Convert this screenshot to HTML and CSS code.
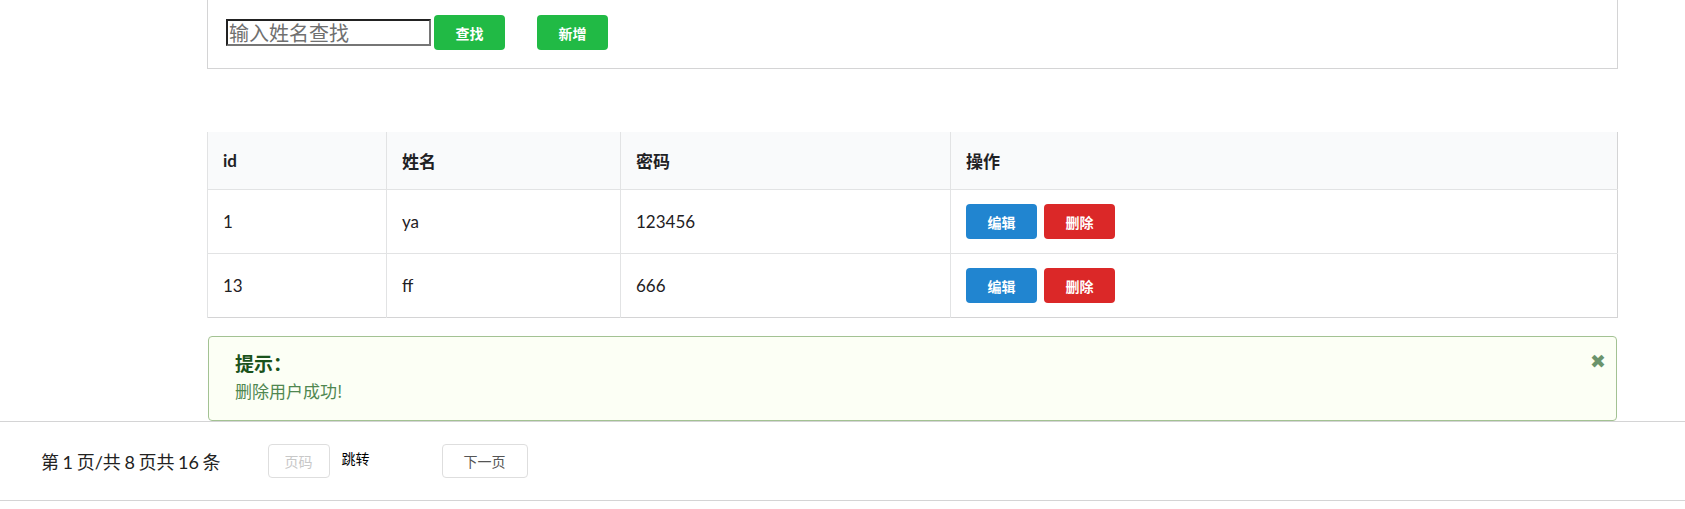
FILE: index.html
```html
<!DOCTYPE html>
<html lang="zh-CN">
<head>
<meta charset="utf-8">
<title>用户管理</title>
<link rel="stylesheet" href="styles.css">
</head>
<body>
<div class="page">
  <div class="search-box">
    <input class="search-input" type="text" placeholder="输入姓名查找">
    <button class="btn btn-green">查找</button>
    <button class="btn btn-green btn-add">新增</button>
  </div>

  <table class="user-table">
    <thead>
      <tr>
        <th class="c-id">id</th>
        <th class="c-name">姓名</th>
        <th class="c-pwd">密码</th>
        <th>操作</th>
      </tr>
    </thead>
    <tbody>
      <tr>
        <td>1</td>
        <td>ya</td>
        <td>123456</td>
        <td><div class="ops"><button class="btn btn-blue">编辑</button><button class="btn btn-red">删除</button></div></td>
      </tr>
      <tr>
        <td>13</td>
        <td>ff</td>
        <td>666</td>
        <td><div class="ops"><button class="btn btn-blue">编辑</button><button class="btn btn-red">删除</button></div></td>
      </tr>
    </tbody>
  </table>

  <div class="message">
    <span class="close">✖</span>
    <div class="msg-header">提示：</div>
    <p class="msg-text">删除用户成功!</p>
  </div>
</div>

<div class="pager">
  <span class="pager-info">第 1 页/共 8 页共 16 条</span>
  <input class="page-input" type="text" placeholder="页码">
  <span class="jump">跳转</span>
  <button class="next-btn">下一页</button>
</div>
</body>
</html>
```
FILE: styles.css
```css
html, body {
  margin: 0;
  padding: 0;
  background: #ffffff;
}

body {
  font-family: Lato, "Noto Sans CJK SC", sans-serif;
  color: rgba(0, 0, 0, 0.87);
}

.page {
  margin-left: 207px;
  width: 1411px;
}

.search-box {
  display: flex;
  align-items: center;
  padding: 15px 18px 18px 18px;
  border: 1px solid #d4d4d5;
  border-top: none;
}

.search-input {
  box-sizing: border-box;
  width: 205px;
  height: 27px;
  margin: 0 3px 0 0;
  padding: 0 1px;
  font-family: "Noto Sans CJK SC", sans-serif;
  font-size: 20px;
  line-height: 23px;
  border-width: 2px;
  border-style: solid;
  border-color: #222 #767676 #767676 #222;
}

.search-input::placeholder {
  color: #707070;
}

.btn {
  box-sizing: border-box;
  width: 71px;
  height: 35px;
  padding: 0;
  border: none;
  border-radius: 4px;
  color: #fff;
  font-family: Lato, "Noto Sans CJK SC", sans-serif;
  font-size: 14px;
  font-weight: 700;
  cursor: pointer;
}

.btn-green {
  background: #21ba45;
}

.btn-add {
  margin-left: 32px;
}

.btn-blue {
  background: #2185d0;
}

.btn-red {
  background: #db2828;
}

.user-table {
  margin-top: 63px;
  width: 1411px;
  border-collapse: collapse;
  border: 1px solid #d4d4d5;
  border-top: none;
  font-size: 17px;
  table-layout: fixed;
}

.user-table th,
.user-table td {
  text-align: left;
  padding: 0 15px;
  border-left: 1px solid #e2e3e4;
  border-top: 1px solid #e2e3e4;
  color: #1f2124;
}

.user-table th {
  background: #f9fafb;
  font-weight: 700;
  height: 57px;
  border-top: none;
}

.user-table td {
  height: 63px;
}

.c-id { width: 148px; }
.c-name { width: 203px; }
.c-pwd { width: 299px; }

.ops {
  display: flex;
  gap: 7px;
}

.message {
  position: relative;
  margin: 18px 1px 0 1px;
  height: 85px;
  box-sizing: border-box;
  padding: 13px 26px 0 26px;
  background: #fcfff5;
  border: 1px solid #a3c293;
  border-radius: 4px;
}

.msg-header {
  font-family: "Noto Sans CJK SC", sans-serif;
  font-size: 19px;
  font-weight: 700;
  line-height: 26px;
  color: #1a531b;
}

.msg-text {
  margin: 3px 0 0 0;
  font-family: "Noto Sans CJK SC", sans-serif;
  font-size: 17px;
  line-height: 24px;
  color: #4f8750;
}

.close {
  position: absolute;
  top: 12px;
  right: 10px;
  font-size: 19px;
  line-height: 24px;
  color: #6b946c;
}

.pager {
  box-sizing: border-box;
  display: flex;
  align-items: center;
  height: 80px;
  padding-left: 41px;
  border-top: 1px solid #d4d4d5;
  border-bottom: 1px solid #d4d4d5;
}

.pager-info {
  font-family: Lato, "Noto Sans CJK SC", sans-serif;
  font-size: 18px;
  color: #222;
  word-spacing: -1px;
}

.page-input {
  box-sizing: border-box;
  width: 62px;
  height: 34px;
  margin-left: 47px;
  padding: 0;
  border: 1px solid #dedede;
  border-radius: 4px;
  text-align: center;
  font-family: "Noto Sans CJK SC", sans-serif;
  font-size: 14px;
}

.page-input::placeholder {
  color: #c8c8c8;
}

.jump {
  margin-left: 12px;
  margin-bottom: 6px;
  font-family: "Noto Sans CJK SC", sans-serif;
  font-size: 14px;
  font-weight: 400;
  color: #000;
}

.next-btn {
  box-sizing: border-box;
  width: 86px;
  height: 34px;
  margin-left: 72px;
  padding: 0;
  background: #fff;
  border: 1px solid #dedede;
  border-radius: 4px;
  font-family: "Noto Sans CJK SC", sans-serif;
  font-size: 14px;
  color: #555;
}
```
